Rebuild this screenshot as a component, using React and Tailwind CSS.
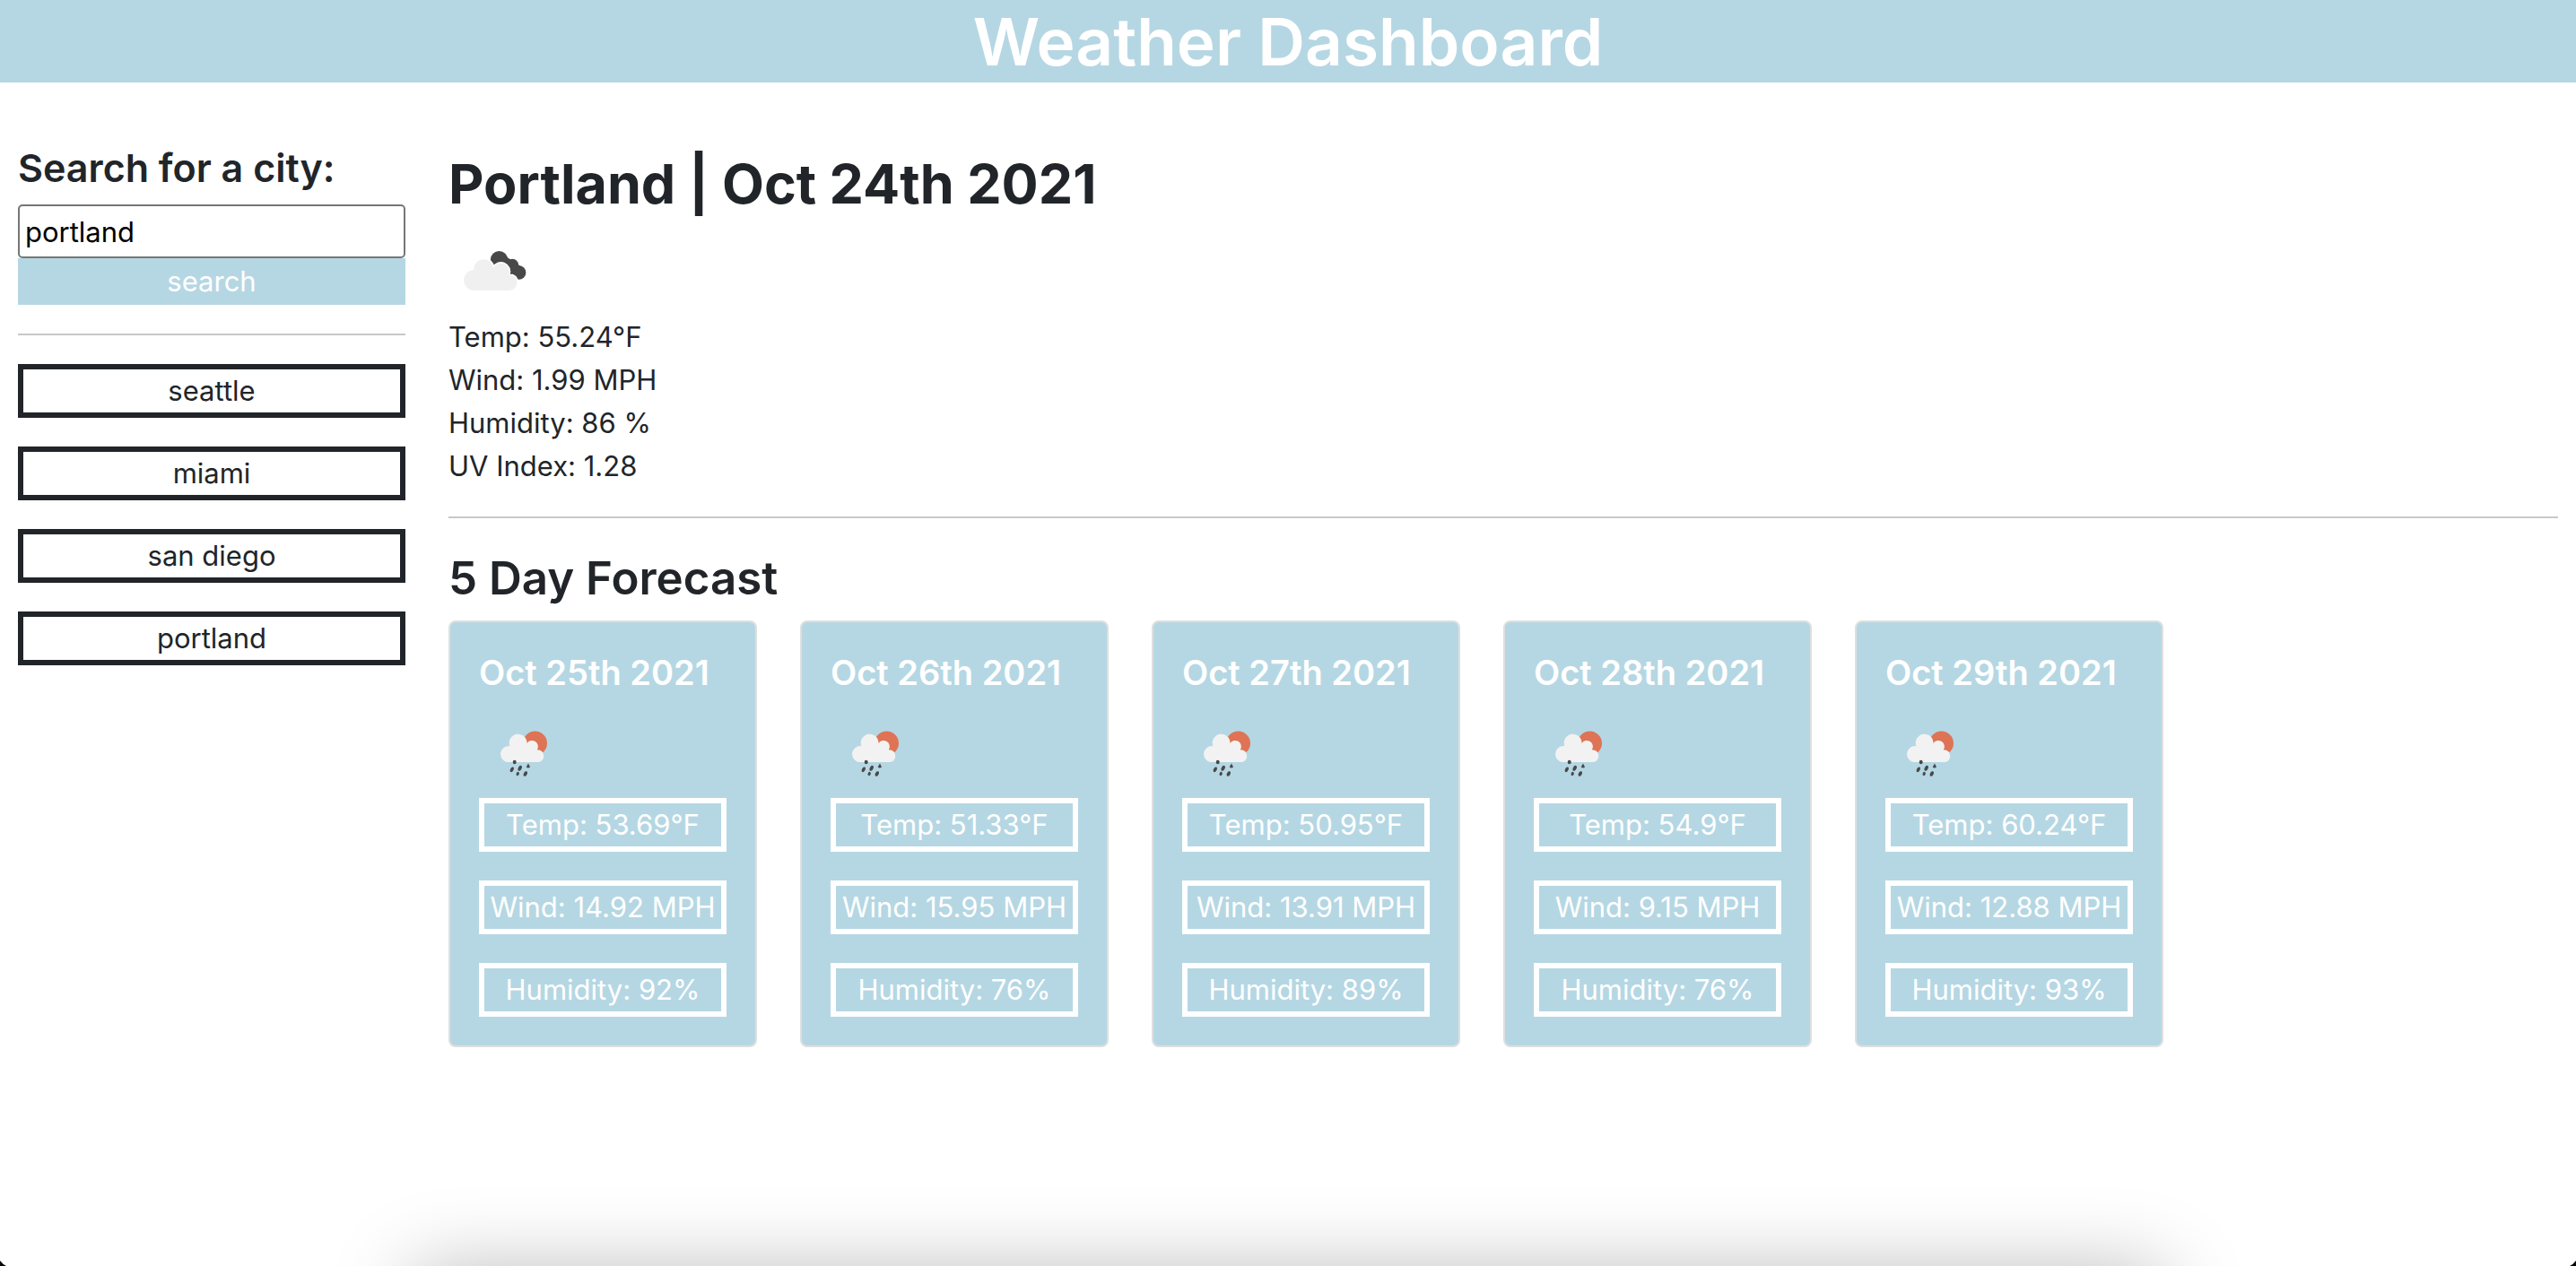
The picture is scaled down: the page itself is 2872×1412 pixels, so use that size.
import { useState } from "react";

const CITIES = ["seattle", "miami", "san diego", "portland"];

const CURRENT = ["Temp: 55.24°F", "Wind: 1.99 MPH", "Humidity: 86 %", "UV Index: 1.28"];

const FORECAST = [
  { date: "Oct 25th 2021", temp: "53.69", wind: "14.92", humidity: "92" },
  { date: "Oct 26th 2021", temp: "51.33", wind: "15.95", humidity: "76" },
  { date: "Oct 27th 2021", temp: "50.95", wind: "13.91", humidity: "89" },
  { date: "Oct 28th 2021", temp: "54.9", wind: "9.15", humidity: "76" },
  { date: "Oct 29th 2021", temp: "60.24", wind: "12.88", humidity: "93" },
];

function BrokenCloudsIcon() {
  return (
    <svg viewBox="0 0 100 100" className="size-[100px]" role="img" aria-label="broken clouds">
      <g fill="#484849">
        <circle cx="56.5" cy="37.5" r="9.6" />
        <circle cx="71.3" cy="43.5" r="6.8" />
        <circle cx="78.6" cy="52" r="7.8" />
        <path d="M48 40 L53 47 L64 55 L75 59 L82 46 L64 34 Z" />
      </g>
      <path
        d="M27 72 A11.6 11.6 0 0 1 25 49.5 Q27 49 28.5 49 A10.6 10.6 0 1 1 50 47 A8.6 8.6 0 0 1 67 54.5 Q76.5 55 76.5 63.5 Q76 71 68 72 Z"
        fill="#f0f0f0"
        stroke="#ffffff"
        strokeWidth="3"
        paintOrder="stroke"
      />
    </svg>
  );
}

function RainIcon() {
  return (
    <svg viewBox="0 0 100 100" className="size-[100px]" role="img" aria-label="rain">
      <circle cx="62.5" cy="39" r="13.5" fill="#de7455" />
      <path
        d="M32 60 A9 9 0 0 1 31 42.3 Q33 42 34.3 42 A9.9 9.9 0 1 1 53.5 39 A6.6 6.6 0 0 1 64.8 46.3 Q72.3 46.5 72.3 53.5 Q71.5 59.5 66 60 Z"
        fill="#f2f2f2"
      />
      <g fill="#48484a">
        <ellipse cx="39.7" cy="60" rx="2" ry="2.3" />
        <ellipse cx="36.8" cy="68.3" rx="1.8" ry="3" transform="rotate(25 36.8 68.3)" />
        <ellipse cx="45.7" cy="66.8" rx="1.9" ry="3.2" transform="rotate(25 45.7 66.8)" />
        <path d="M55 61.5 L57 65.5 Q55 67.5 52.7 65.5 Z" />
        <ellipse cx="43.2" cy="73" rx="1.6" ry="2.2" transform="rotate(20 43.2 73)" />
        <ellipse cx="51.8" cy="73" rx="1.9" ry="2.9" transform="rotate(25 51.8 73)" />
      </g>
    </svg>
  );
}

function Reading({ children }) {
  return (
    <li className="border-6 border-white text-center text-[31px] leading-[48px] whitespace-nowrap">
      {children}
    </li>
  );
}

function ForecastCard({ day }) {
  return (
    <article className="w-[344px] rounded-lg border-2 border-[#dfdfdf] bg-[#b5d7e3] p-8 text-white">
      <h3 className="text-[38px] leading-[48px] font-semibold whitespace-nowrap">{day.date}</h3>
      <div className="mt-4">
        <RainIcon />
      </div>
      <ul className="flex flex-col gap-8">
        <Reading>Temp: {day.temp}°F</Reading>
        <Reading>Wind: {day.wind} MPH</Reading>
        <Reading>Humidity: {day.humidity}%</Reading>
      </ul>
    </article>
  );
}

export default function App() {
  const [city, setCity] = useState("portland");

  return (
    <div className="relative min-h-screen overflow-hidden bg-white font-['Inter',sans-serif] text-[31px] leading-[48px] text-[#212529]">
      <header className="bg-[#b5d7e3] pt-0.5 text-center text-white">
        <h1 className="text-[73px] leading-[90px] font-semibold">Weather Dashboard</h1>
      </header>

      <div className="flex gap-12 px-5">
        <aside className="w-[432px] shrink-0 pt-[66px]">
          <form onSubmit={(e) => e.preventDefault()}>
            <label htmlFor="city" className="mb-3 block text-[43px] leading-[58px] font-semibold">
              Search for a city:
            </label>
            <input
              id="city"
              type="text"
              value={city}
              onChange={(e) => setCity(e.target.value)}
              className="block h-[60px] w-full rounded-[5px] border-2 border-[#767676] bg-white px-1.5 text-black"
            />
            <button type="submit" className="block h-[52px] w-full bg-[#b5d7e3] text-white">
              search
            </button>
          </form>
          <hr className="my-8 border-t-2 border-[#c8c8c9]" />
          <div className="flex flex-col gap-8">
            {CITIES.map((name) => (
              <button
                key={name}
                type="button"
                onClick={() => setCity(name)}
                className="border-6 border-[#212529] leading-[48px]"
              >
                {name}
              </button>
            ))}
          </div>
        </aside>

        <main className="min-w-0 grow pt-[75px]">
          <h2 className="text-[61px] leading-[77px] font-bold">Portland | Oct 24th 2021</h2>
          <div className="mt-2">
            <BrokenCloudsIcon />
          </div>
          <ul>
            {CURRENT.map((line) => (
              <li key={line}>{line}</li>
            ))}
          </ul>
          <hr className="my-8 border-t-2 border-[#c8c8c9]" />
          <h2 className="mb-3 text-[51px] leading-[70px] font-semibold">5 Day Forecast</h2>
          <div className="flex flex-wrap gap-12">
            {FORECAST.map((day) => (
              <ForecastCard key={day.date} day={day} />
            ))}
          </div>
        </main>
      </div>

      <div
        aria-hidden="true"
        className="absolute top-full right-[16%] left-[16%] h-40 shadow-[0_6px_90px_rgba(0,0,0,0.28)]"
      />
      <svg viewBox="0 0 7 6" className="absolute bottom-0 left-0 h-1.5 w-[7px]" aria-hidden="true">
        <path d="M0 0 Q3 4 7 6 H0 Z" fill="#05070f" />
      </svg>
      <svg viewBox="0 0 7 6" className="absolute right-0 bottom-0 h-1.5 w-[7px]" aria-hidden="true">
        <path d="M7 0 Q4 4 0 6 H7 Z" fill="#05070f" />
      </svg>
    </div>
  );
}
